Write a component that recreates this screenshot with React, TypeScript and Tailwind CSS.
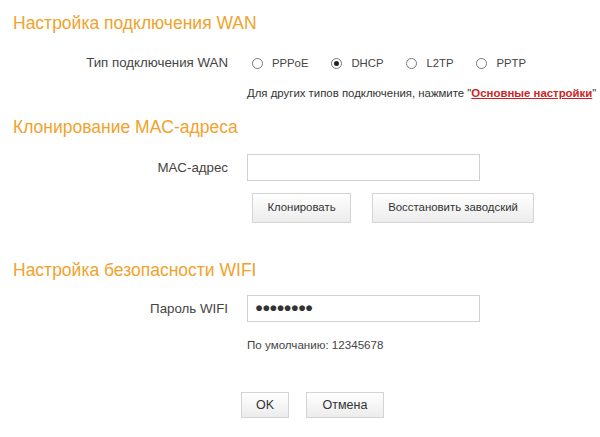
import React from 'react';

const font = { fontFamily: '"Liberation Sans", Arial, sans-serif' };

const Heading: React.FC<{ children: React.ReactNode; className?: string }> = ({ children, className }) => (
  <h2 className={`h-5 leading-5 text-[17.5px] text-[#f0a22c] pl-[13px] ${className ?? ''}`}>{children}</h2>
);

const Radio: React.FC<{ label: string; checked?: boolean }> = ({ label, checked }) => (
  <label className="flex items-center gap-[9px]">
    <span className="w-[11px] h-[11px] rounded-full border border-[#777] bg-white flex items-center justify-center">
      {checked && <span className="w-[5px] h-[5px] rounded-full bg-[#222]" />}
    </span>
    <span>{label}</span>
  </label>
);

const Button: React.FC<{ children: React.ReactNode; className?: string }> = ({ children, className }) => (
  <button
    className={`border border-[#d4d4d4] bg-gradient-to-b from-white to-[#ececec] text-[#333] ${className ?? ''}`}
  >
    {children}
  </button>
);

const App: React.FC = () => {
  return (
    <div style={font} className="w-[600px] h-[437px] bg-white text-[#444] overflow-hidden pt-[13px]">
      {/* WAN */}
      <Heading>Настройка подключения WAN</Heading>

      <div className="flex items-center h-[22px] mt-[19px]">
        <div className="w-[228px] text-right text-[13.3px]">Тип подключения WAN</div>
        <div className="flex items-center pl-[24px] gap-[23px] text-[11.3px]">
          <Radio label="PPPoE" />
          <Radio label="DHCP" checked />
          <Radio label="L2TP" />
          <Radio label="PPTP" />
        </div>
      </div>

      <div className="h-4 leading-4 mt-[11px] pl-[247px] whitespace-nowrap text-[#333] text-[11.4px]">
        Для других типов подключения, нажмите "
        <a className="text-[#cc1f1f] font-bold underline">Основные настройки</a>"
      </div>

      {/* MAC */}
      <Heading className="mt-4">Клонирование MAC-адреса</Heading>

      <div className="flex items-center mt-[17px]">
        <div className="w-[228px] text-right text-[13.3px]">MAC-адрес</div>
        <input className="ml-[19px] w-[233px] h-[27px] border border-[#d0d0d0] outline-none px-2" />
      </div>

      <div className="flex mt-3 pl-[252px] gap-[21px] text-[11.4px]">
        <Button className="w-[99px] h-[30px]">Клонировать</Button>
        <Button className="w-[162px] h-[30px]">Восстановить заводский</Button>
      </div>

      {/* WIFI */}
      <Heading className="mt-[37px]">Настройка безопасности WIFI</Heading>

      <div className="flex items-center mt-[15px]">
        <div className="w-[228px] text-right text-[13.3px]">Пароль WIFI</div>
        <div className="ml-[19px] w-[233px] h-[27px] border border-[#d0d0d0] flex items-center px-[7px] text-[#333] text-[13.5px] tracking-[-1px]">
          ●●●●●●●●
        </div>
      </div>

      <div className="h-4 leading-4 mt-[15px] pl-[247px] text-[11.6px]">По умолчанию: 12345678</div>

      <div className="flex mt-[39px] pl-[241px] gap-[17px] text-[12.5px]">
        <Button className="w-[48px] h-[26px]">OK</Button>
        <Button className="w-[78px] h-[26px]">Отмена</Button>
      </div>
    </div>
  );
};

export default App;
